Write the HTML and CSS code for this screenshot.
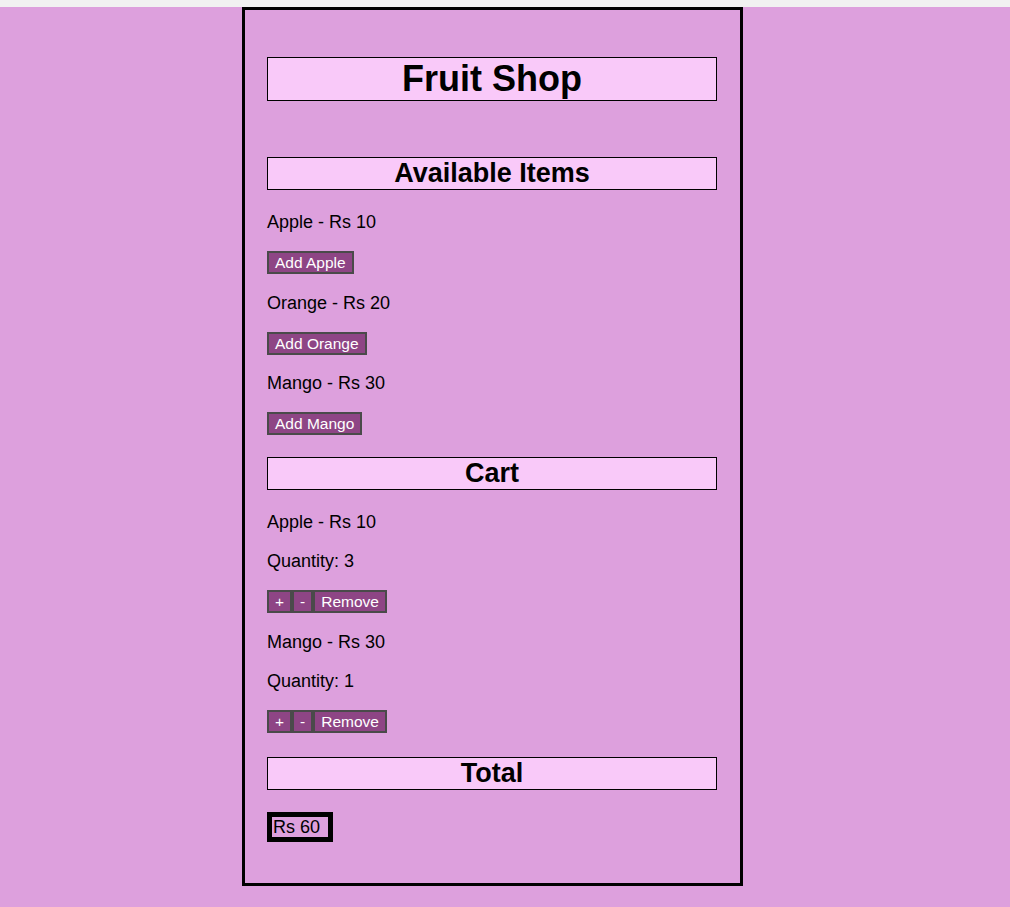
FILE: index.html
```html
<!DOCTYPE html>
<html>
<head>
<meta charset="utf-8">
<title>Fruit Shop</title>
<link rel="stylesheet" href="styles.css">
</head>
<body>
<div class="topbar"></div>
<div class="shop">
  <h1 class="title">Fruit Shop</h1>
  <h2 class="section first">Available Items</h2>
  <div class="item">
    <p class="line">Apple - Rs 10</p>
    <div class="actions"><button class="btn">Add Apple</button></div>
  </div>
  <div class="item">
    <p class="line">Orange - Rs 20</p>
    <div class="actions"><button class="btn">Add Orange</button></div>
  </div>
  <div class="item">
    <p class="line">Mango - Rs 30</p>
    <div class="actions"><button class="btn">Add Mango</button></div>
  </div>
  <h2 class="section">Cart</h2>
  <div class="item">
    <p class="line">Apple - Rs 10</p>
    <p class="line">Quantity: 3</p>
    <div class="actions"><button class="btn">+</button><button class="btn">-</button><button class="btn">Remove</button></div>
  </div>
  <div class="item">
    <p class="line">Mango - Rs 30</p>
    <p class="line">Quantity: 1</p>
    <div class="actions"><button class="btn">+</button><button class="btn">-</button><button class="btn">Remove</button></div>
  </div>
  <h2 class="section total-head">Total</h2>
  <div class="total">Rs 60</div>
</div>
</body>
</html>
```
FILE: styles.css
```css
html, body {
  margin: 0;
  padding: 0;
  background: #dda0dd;
}
body {
  font-family: "Liberation Sans", Arial, sans-serif;
  font-size: 18px;
  color: #000;
  min-height: 907px;
}
.topbar {
  height: 7px;
  background: #f1f1f1;
}
.shop {
  width: 450px;
  margin-left: 242px;
  padding: 25px 23px 41px 22px;
  border: 3px solid #000;
  display: flex;
  flex-direction: column;
  align-items: flex-start;
}
.title {
  align-self: stretch;
  margin: 22px 0 0;
  background: #f9c9f9;
  border: 1px solid #000;
  font-size: 36px;
  line-height: 42px;
  text-align: center;
}
.section {
  align-self: stretch;
  margin: 22px 0 0;
  background: #f9c9f9;
  border: 1px solid #000;
  font-size: 27px;
  line-height: 31px;
  text-align: center;
}
.section.first {
  margin-top: 56px;
}
.section.total-head {
  margin-top: 24.5px;
}
.item {
  display: flex;
  flex-direction: column;
  align-items: flex-start;
}
.line {
  margin: 19px 0 0;
  line-height: 20px;
}
.section + .item > .line:first-child {
  margin-top: 22px;
}
.item + .item > .line:first-child {
  margin-top: 18.5px;
}
.actions {
  margin-top: 19px;
  display: flex;
}
.btn {
  font-family: "Liberation Sans", Arial, sans-serif;
  font-size: 15.5px;
  line-height: 17px;
  color: #fff;
  background: #8e4585;
  border: 2px solid #4a4a4a;
  padding: 1px 6px;
  margin: 0;
  cursor: pointer;
}
.total {
  margin-top: 22px;
  border: 5px solid #000;
  padding: 0 8px 0 1px;
  line-height: 20px;
}
```
